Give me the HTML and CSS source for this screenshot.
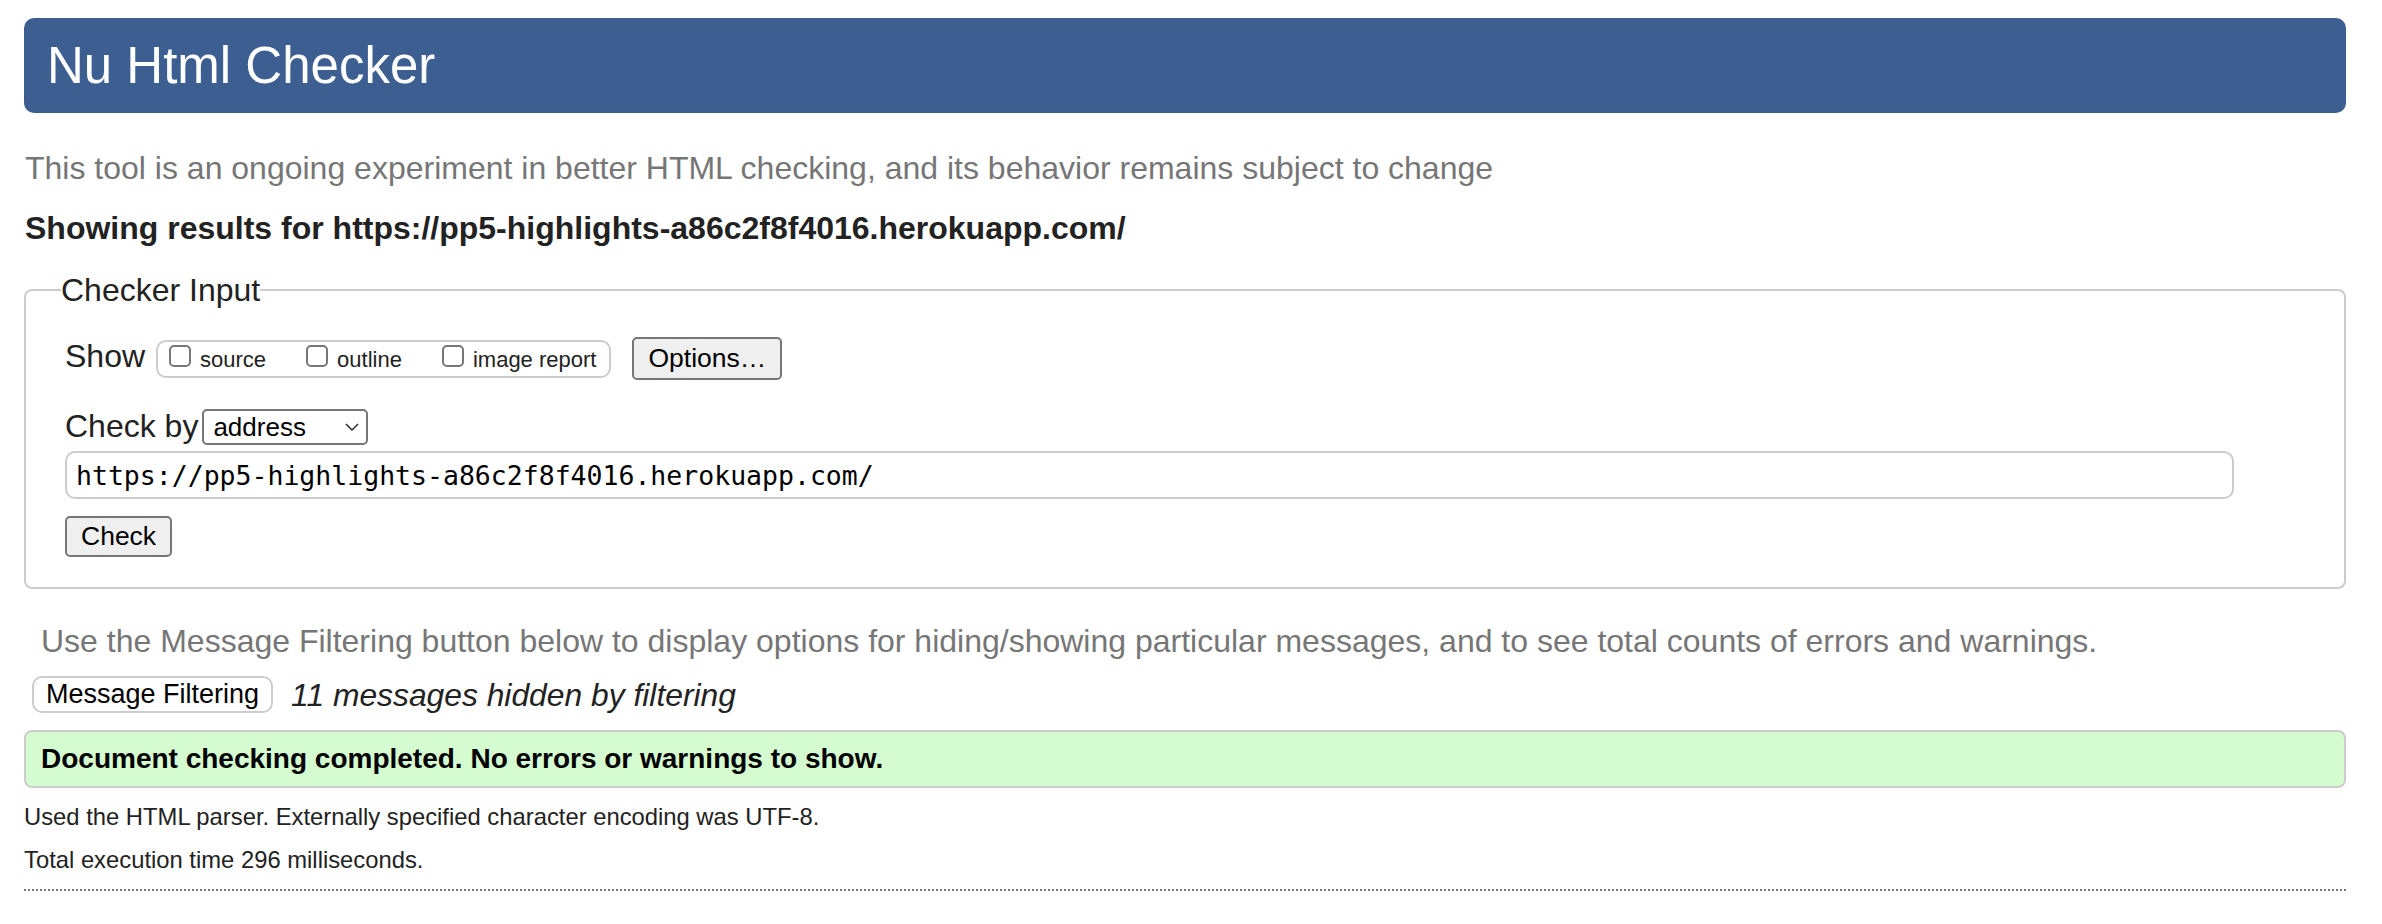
FILE: index.html
```html
<!DOCTYPE html>
<html lang="en">
<head>
<meta charset="utf-8">
<title>Nu Html Checker</title>
<link rel="stylesheet" href="styles.css">
</head>
<body>
<header class="masthead">
  <h1 class="title">Nu Html Checker</h1>
</header>
<p class="intro">This tool is an ongoing experiment in better HTML checking, and its behavior remains subject to change</p>
<p class="results-for">Showing results for https://pp5-highlights-a86c2f8f4016.herokuapp.com/</p>
<form class="checker" action="#">
  <fieldset class="checker-input">
    <legend class="legend">Checker Input</legend>
    <div class="checker-body">
      <div class="show-row">
        <span class="row-label show-label">Show</span>
        <div class="show-group">
          <label class="opt"><input type="checkbox" class="box">source</label>
          <label class="opt"><input type="checkbox" class="box">outline</label>
          <label class="opt"><input type="checkbox" class="box">image report</label>
        </div>
        <button type="button" class="btn options-btn">Options…</button>
      </div>
      <div class="by-row">
        <span class="row-label by-label">Check by</span>
        <div class="select-wrap">
          <select class="select"><option>address</option></select>
          <svg class="chevron" width="14" height="8" viewBox="0 0 14 8" aria-hidden="true"><path d="M1 1 L7 7 L13 1" fill="none" stroke="#222" stroke-width="1.4"/></svg>
        </div>
      </div>
      <input class="url" type="text" value="https://pp5-highlights-a86c2f8f4016.herokuapp.com/">
      <div class="check-row"><button type="button" class="btn check-btn">Check</button></div>
    </div>
  </fieldset>
</form>
<p class="filter-hint">Use the Message Filtering button below to display options for hiding/showing particular messages, and to see total counts of errors and warnings.</p>
<div class="filter-row">
  <button type="button" class="filter-btn">Message Filtering</button>
  <em class="hidden-count">11 messages hidden by filtering</em>
</div>
<div class="success">Document checking completed. No errors or warnings to show.</div>
<p class="details details-first">Used the HTML parser. Externally specified character encoding was UTF-8.</p>
<p class="details details-second">Total execution time 296 milliseconds.</p>
<hr class="rule">
</body>
</html>
```
FILE: styles.css
```css
* { box-sizing: border-box; }

html { background: #fff; }

body {
  margin: 0;
  padding: 18px 36px 0 24px;
  font-family: "Liberation Sans", Arial, Helvetica, sans-serif;
  color: #222;
  background: #fff;
}

.masthead {
  height: 95px;
  display: flex;
  align-items: center;
  padding-left: 23px;
  background: #3d5e91;
  border-radius: 10px;
}

.title {
  margin: 0;
  font-size: 51px;
  font-weight: normal;
  line-height: 1;
  color: #fff;
}

.intro {
  margin: 37px 0 0 1px;
  font-size: 32px;
  line-height: 36px;
  color: #767676;
}

.results-for {
  margin: 24px 0 0 1px;
  font-size: 32px;
  font-weight: bold;
  line-height: 36px;
  color: #222;
}

.checker { margin: 0; }

.checker-input {
  margin: 26px 0 0;
  padding: 0;
  border: 2px solid #ccc;
  border-radius: 8px;
  min-width: 0;
}

.legend {
  margin-left: 35px;
  padding: 0;
  font-size: 32px;
  line-height: 36px;
  color: #222;
}

.checker-body {
  padding: 29px 110px 30px 39px;
}

.show-row {
  display: flex;
  align-items: center;
  height: 43px;
}

.row-label {
  font-size: 32px;
  line-height: 36px;
  color: #222;
  white-space: nowrap;
}

.show-label {
  margin: 0 11px 6px 0;
}

.show-group {
  display: flex;
  gap: 40px;
  height: 38px;
  padding: 0 13px 0 11px;
  border: 2px solid #ccc;
  border-radius: 10px;
}

.opt {
  display: block;
  padding-top: 1px;
  font-size: 22px;
  line-height: 33px;
  color: #222;
  white-space: nowrap;
}

.box {
  -webkit-appearance: none;
  appearance: none;
  display: inline-block;
  width: 22px;
  height: 22px;
  margin: 0 9px 0 0;
  border: 2px solid #777;
  border-radius: 5px;
  background: #fff;
  vertical-align: baseline;
}

.btn {
  height: 43px;
  padding: 0 14px;
  font-family: "Liberation Sans", Arial, Helvetica, sans-serif;
  font-size: 26.5px;
  line-height: 1;
  color: #000;
  background: #efefef;
  border: 2px solid #767676;
  border-radius: 5px;
}

.options-btn {
  margin-left: 21px;
}

.by-row {
  display: flex;
  align-items: center;
  margin-top: 29px;
  height: 36px;
}

.by-label {
  margin: 0 4px 3px 0;
}

.select-wrap {
  position: relative;
  width: 166px;
  height: 36px;
}

.select {
  -webkit-appearance: none;
  appearance: none;
  width: 100%;
  height: 100%;
  padding: 0 0 0 9px;
  font-family: "Liberation Sans", Arial, Helvetica, sans-serif;
  font-size: 26px;
  color: #000;
  background: #fff;
  border: 2px solid #767676;
  border-radius: 5px;
}

.chevron {
  position: absolute;
  right: 9px;
  top: 14px;
  pointer-events: none;
}

.url {
  display: block;
  width: 100%;
  height: 48px;
  margin-top: 6px;
  padding: 0 9px;
  font-family: "DejaVu Sans Mono", "Liberation Mono", monospace;
  font-size: 26.5px;
  color: #000;
  background: #fff;
  border: 2px solid #ccc;
  border-radius: 10px;
}

.check-row {
  margin-top: 17px;
}

.check-btn {
  height: 41px;
  padding: 0 14px;
}

.filter-hint {
  margin: 34px 0 0 17px;
  font-size: 32px;
  line-height: 36px;
  color: #767676;
}

.filter-row {
  display: flex;
  align-items: center;
  margin: 17px 0 0 8px;
}

.filter-btn {
  height: 37px;
  padding: 0 12px;
  font-family: "Liberation Sans", Arial, Helvetica, sans-serif;
  font-size: 27px;
  line-height: 1;
  color: #000;
  background: #fff;
  border: 2px solid #ccc;
  border-radius: 10px;
}

.hidden-count {
  margin-left: 18px;
  font-size: 31.8px;
  line-height: 36px;
  color: #222;
}

.success {
  display: flex;
  align-items: center;
  height: 58px;
  margin-top: 17px;
  padding-left: 15px;
  font-size: 28px;
  font-weight: bold;
  color: #000;
  background: #d5fbd0;
  border: 2px solid #ccc;
  border-radius: 8px;
}

.details {
  margin: 0;
  font-size: 23.8px;
  line-height: 28px;
  color: #222;
}

.details-first { margin-top: 15px; }
.details-second { margin-top: 15px; }

.rule {
  height: 0;
  margin: 15px 0 0;
  border: 0;
  border-top: 2px dotted #777;
}
```
